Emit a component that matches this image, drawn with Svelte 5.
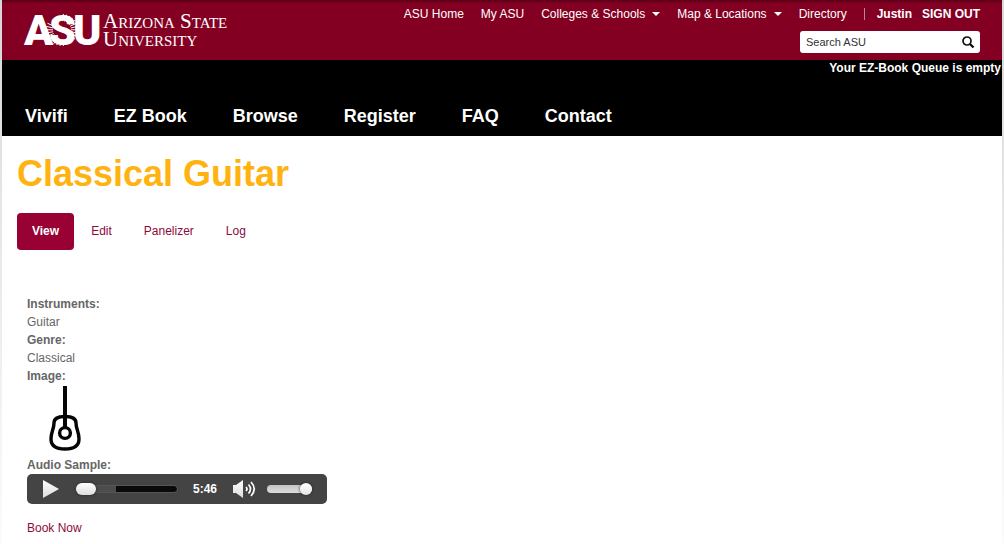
<script>
  const links = [
    { label: 'ASU Home' },
    { label: 'My ASU' },
    { label: 'Colleges & Schools', menu: true },
    { label: 'Map & Locations', menu: true },
    { label: 'Directory' }
  ];
  const sections = ['Vivifi', 'EZ Book', 'Browse', 'Register', 'FAQ', 'Contact'];
  const tabs = ['View', 'Edit', 'Panelizer', 'Log'];

  // Sunburst around the S: one fan at the lower left, one at the upper right
  const fan = (from) =>
    Array.from({ length: 11 }, (_, i) => {
      const a = ((from + i * 12) * Math.PI) / 180;
      return {
        x1: 38 + 9 * Math.cos(a),
        y1: 18 + 9 * Math.sin(a),
        x2: 38 + 16 * Math.cos(a),
        y2: 18 + 16 * Math.sin(a)
      };
    });
  const rays = [...fan(85), ...fan(-85)];

  let query = $state('');
  let tab = $state('View');
  let position = $state(0);
  let volume = $state(100);
</script>

<div class="page">
  <header>
    <a class="logo" href="#home">
      <svg viewBox="0 0 76 36" width="76" height="36">
        <g class="mark">
          <text x="0" y="33">A</text>
          <text x="49" y="33">U</text>
        </g>
        <circle cx="38" cy="18" r="13" fill="#840023" />
        {#each rays as r}
          <line x1={r.x1} y1={r.y1} x2={r.x2} y2={r.y2} stroke="#fff" stroke-width="1" />
        {/each}
        <g class="mark"><text x="25" y="33">S</text></g>
      </svg>
      <span class="wordmark"><span>Arizona State</span><span>University</span></span>
    </a>
    <div class="tools">
      <nav class="global" aria-label="ASU">
        {#each links as link}
          <a href="#top">{link.label}{#if link.menu}<i class="caret"></i>{/if}</a>
        {/each}
        <span class="account"><a href="#me">Justin</a><a href="#out">SIGN OUT</a></span>
      </nav>
      <form class="search" onsubmit={(e) => e.preventDefault()}>
        <input type="text" aria-label="Search ASU" placeholder="Search ASU" bind:value={query} />
        <button aria-label="Search">
          <svg viewBox="0 0 14 14" width="14" height="14" fill="none" stroke="#111">
            <circle cx="6" cy="6" r="4" stroke-width="1.7" />
            <path d="M9 9l3.5 3.5" stroke-width="2.4" />
          </svg>
        </button>
      </form>
    </div>
  </header>

  <div class="band">
    <p>Your EZ-Book Queue is empty</p>
    <nav aria-label="Main">
      {#each sections as s}<a href="#section">{s}</a>{/each}
    </nav>
  </div>

  <main>
    <h1>Classical Guitar</h1>
    <nav class="tabs" aria-label="Tabs">
      {#each tabs as t}
        <a href="#tab" class:active={tab === t} onclick={() => (tab = t)}>{t}</a>
      {/each}
    </nav>

    <div class="fields">
      <dl>
        <dt>Instruments:</dt>
        <dd>Guitar</dd>
        <dt>Genre:</dt>
        <dd>Classical</dd>
        <dt>Image:</dt>
        <dd class="image">
          <svg viewBox="0 0 76 71" width="76" height="71" fill="none" stroke="#050505" role="img" aria-label="Guitar">
            <path d="M38 1V43" stroke-width="4" />
            <circle cx="38" cy="48" r="5.4" stroke-width="3.4" />
            <path d="M38 31.500C31 31.500 27 33 27 38C27 44 24 47 24 54C24 62 30 64 38 64S52 62 52 54C52 47 49 44 49 38C49 33 45 31.500 38 31.500Z" stroke-width="3.4" />
          </svg>
        </dd>
        <dt>Audio Sample:</dt>
        <dd class="player">
          <button aria-label="Play">
            <svg viewBox="0 0 16 18" width="16" height="18">
              <defs>
                <linearGradient id="metal" x2="0" y2="1">
                  <stop stop-color="#fff" /><stop offset="1" stop-color="#ddd" />
                </linearGradient>
              </defs>
              <path d="M0 0L16 9L0 18Z" fill="url(#metal)" />
            </svg>
          </button>
          <input class="seek" type="range" aria-label="Position" min="0" max="346" bind:value={position} />
          <time>5:46</time>
          <button aria-label="Mute">
            <svg viewBox="0 0 23 18" width="23" height="18">
              <path d="M0 5H3L10 0V18L3 13H0Z" fill="url(#metal)" />
              <path d="M13 7Q15 9 13 11M15.500 4.500Q19.500 9 15.500 13.500M18 2Q24.500 9 18 16" fill="none" stroke="#fff" stroke-width="1.7" />
            </svg>
          </button>
          <input class="volume" type="range" aria-label="Volume" bind:value={volume} />
        </dd>
      </dl>
      <a class="book" href="#book">Book Now</a>
    </div>
  </main>
</div>

<style>
  :global(body) {
    background: linear-gradient(#d8d8d8, #fff 600px);
    font: 12px/18px "Liberation Sans", Arial, sans-serif;
    color: #666;
  }
  a { color: #8c0a3c; text-decoration: none; }
  button { border: 0; padding: 0; background: none; display: flex; cursor: pointer; }
  .page { margin: 0 2px; min-height: 100vh; background: #fff; }
  header {
    display: flex;
    justify-content: space-between;
    align-items: flex-start;
    padding: 5px 22px 7px;
    background: linear-gradient(#5c0018, #840023 4px);
  }
  header a { color: #fff; }
  .logo { display: flex; padding-top: 7px; gap: 3px; }
  .logo svg { overflow: visible; }
  .mark { font: 900 43px Roboto, sans-serif; fill: #fff; }
  .wordmark {
    display: flex;
    flex-direction: column;
    font: 21px/18px "Liberation Serif", serif;
    font-variant: small-caps;
    white-space: nowrap;
  }
  .tools { display: flex; flex-direction: column; align-items: flex-end; gap: 8px; }
  .global { display: flex; gap: 17px; white-space: nowrap; }
  .caret {
    display: inline-block;
    margin-left: 7px;
    vertical-align: 2px;
    border: 4px solid transparent;
    border-top-color: #fff;
    border-bottom: 0;
  }
  .account { display: flex; align-items: center; gap: 10px; font-weight: bold; }
  .account::before { content: ""; height: 12px; margin-right: 2px; border-left: 1px solid #b38a94; }
  .search {
    display: flex;
    align-items: center;
    justify-content: space-between;
    width: 180px;
    height: 22px;
    box-sizing: border-box;
    padding: 0 5px 0 6px;
    border-radius: 3px;
    background: #fff;
  }
  .search input {
    flex: 1;
    min-width: 0;
    padding: 0;
    border: 0;
    outline: 0;
    font: 11px "Liberation Sans", Arial, sans-serif;
  }
  .search input::placeholder { color: #333; opacity: 1; }
  .band { background: #000; color: #fff; font-weight: bold; padding-bottom: 3px; }
  .band p { margin: 0; padding-right: 1px; line-height: 16px; text-align: right; }
  .band nav { display: flex; gap: 46px; padding: 23px 23px 0; }
  .band nav a { color: #fff; font-size: 18px; line-height: 34px; }
  main { padding: 18px 15px 8px; }
  h1 { margin: 0 0 19px; font-size: 36px; line-height: 40px; color: #ffb310; }
  .tabs { display: flex; gap: 2px; }
  .tabs a { padding: 9px 15px 10px; border-radius: 4px; }
  .tabs .active { background: #990033; color: #fff; font-weight: bold; }
  .fields { padding: 45px 10px 0; }
  dl, dd { margin: 0; }
  dt { font-weight: bold; }
  .image { display: flex; height: 71px; }
  .player {
    display: flex;
    align-items: center;
    width: 300px;
    height: 30px;
    box-sizing: border-box;
    padding: 0 15px 0 16px;
    border-radius: 5px;
    background: #444;
  }
  .player input { appearance: none; height: 12px; background: none; }
  .player .seek { width: 103px; margin: 0 0 0 16px; }
  .seek::-webkit-slider-runnable-track {
    height: 8px;
    box-sizing: border-box;
    border: 1px solid #555;
    border-radius: 4px;
    background: linear-gradient(90deg, #4d4d4d 40%, #0a0a0a 40%);
  }
  .seek::-webkit-slider-thumb {
    appearance: none;
    width: 20px;
    height: 12px;
    margin-top: -3px;
    border-radius: 6px;
    background: linear-gradient(#fff, #ddd);
    box-shadow: 0 0 3px #222;
  }
  .player time { width: 26px; margin: 0 15px; color: #fff; font-weight: bold; }
  .player .volume { width: 45px; margin: 0 0 0 11px; }
  .volume::-webkit-slider-runnable-track {
    height: 8px;
    border-radius: 4px;
    background: linear-gradient(#c4c4c4, #ddd);
  }
  .volume::-webkit-slider-thumb {
    appearance: none;
    width: 12px;
    height: 12px;
    margin-top: -2px;
    border-radius: 50%;
    background: linear-gradient(#fff, #e4e4e4);
    box-shadow: 0 0 3px #222;
  }
  .book { display: inline-block; margin-top: 15px; }
</style>
